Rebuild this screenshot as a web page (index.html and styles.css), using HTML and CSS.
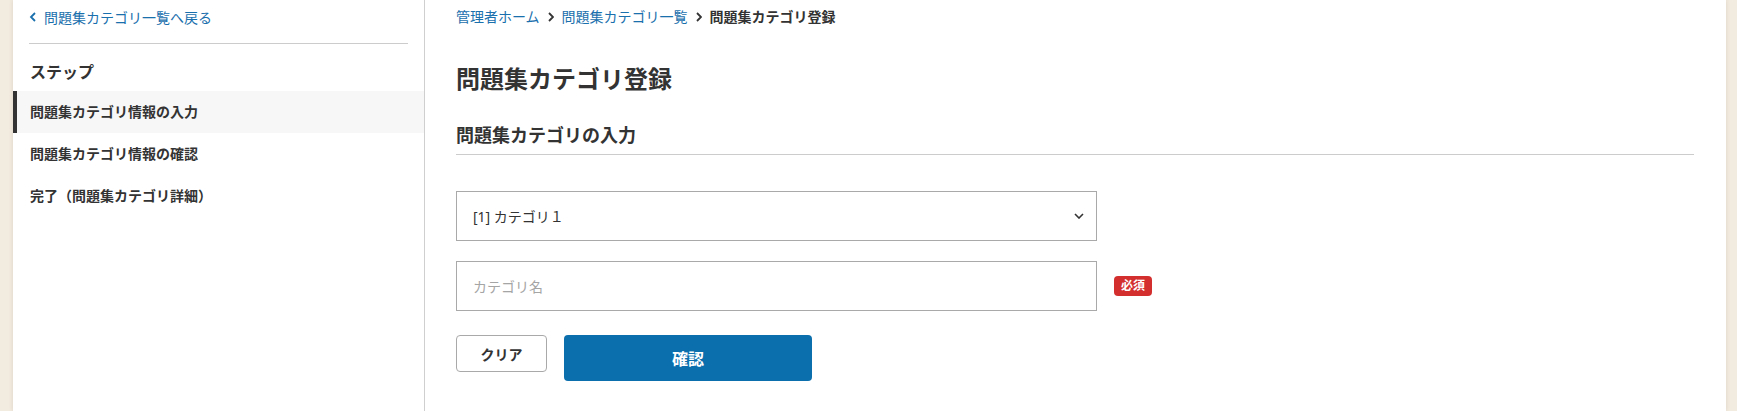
FILE: index.html
```html
<!DOCTYPE html>
<html lang="ja">
<head>
<meta charset="utf-8">
<title>問題集カテゴリ登録</title>
<link rel="stylesheet" href="styles.css">
</head>
<body>
<div class="page">
  <aside class="sidebar">
    <div class="back-wrap">
      <a class="back" href="#">
        <svg class="back-icon" width="8" height="10" viewBox="0 0 8 10"><polyline points="6,1 2,5 6,9" fill="none" stroke="currentColor" stroke-width="1.8"/></svg>
        <span>問題集カテゴリ一覧へ戻る</span>
      </a>
    </div>
    <h2 class="step-title">ステップ</h2>
    <ul class="steps">
      <li class="step active">問題集カテゴリ情報の入力</li>
      <li class="step">問題集カテゴリ情報の確認</li>
      <li class="step">完了（問題集カテゴリ詳細）</li>
    </ul>
  </aside>
  <main class="main">
    <nav class="crumbs">
      <a href="#" class="crumb-link">管理者ホーム</a>
      <svg class="crumb-sep" width="6" height="10" viewBox="0 0 6 10"><polyline points="1,1 5,5 1,9" fill="none" stroke="currentColor" stroke-width="1.8"/></svg>
      <a href="#" class="crumb-link">問題集カテゴリ一覧</a>
      <svg class="crumb-sep" width="6" height="10" viewBox="0 0 6 10"><polyline points="1,1 5,5 1,9" fill="none" stroke="currentColor" stroke-width="1.8"/></svg>
      <span class="crumb-current">問題集カテゴリ登録</span>
    </nav>
    <h1 class="title">問題集カテゴリ登録</h1>
    <h2 class="section">問題集カテゴリの入力</h2>
    <form class="form">
      <div class="row">
        <div class="select-wrap">
          <select class="select">
            <option>[1] カテゴリ１</option>
          </select>
          <svg class="select-arrow" width="10" height="6" viewBox="0 0 10 6"><polyline points="1,1 5,5 9,1" fill="none" stroke="currentColor" stroke-width="1.6"/></svg>
        </div>
      </div>
      <div class="row">
        <input class="input" type="text" placeholder="カテゴリ名">
        <span class="badge">必須</span>
      </div>
      <div class="buttons">
        <button type="button" class="btn-clear">クリア</button>
        <button type="button" class="btn-confirm">確認</button>
      </div>
    </form>
  </main>
</div>
</body>
</html>
```

FILE: styles.css
```css
* { box-sizing: border-box; }
html, body { margin: 0; padding: 0; }
body {
  background: #f2ebdf;
  font-family: "Noto Sans", "Noto Sans CJK JP", sans-serif;
  color: #333;
}
.page {
  display: flex;
  margin: 0 11px 0 13px;
  min-height: 411px;
  background: #fff;
  box-shadow: 0 0 4px rgba(120, 100, 70, 0.18);
}
.sidebar {
  width: 412px;
  flex: none;
  border-right: 1px solid #cfcfcf;
}
.back-wrap {
  margin: 0 16px;
  padding: 6px 0 15px;
  border-bottom: 1px solid #cccccc;
}
.back {
  display: flex;
  align-items: center;
  gap: 7px;
  height: 22px;
  color: #1a6fad;
  text-decoration: none;
  font-size: 14px;
}
.back-icon { flex: none; }
.step-title {
  margin: 16px 0 7px 17px;
  font-size: 16px;
  line-height: 24px;
  font-weight: 700;
  color: #333;
}
.steps { list-style: none; margin: 0; padding: 0; }
.step {
  height: 42px;
  line-height: 42px;
  padding-left: 17px;
  font-size: 14px;
  font-weight: 700;
  color: #333;
}
.step.active {
  background: #f7f7f7;
  border-left: 4px solid #333;
  padding-left: 13px;
}
.main {
  flex: 1;
  padding: 0 32px 0 31px;
}
.crumbs {
  display: flex;
  align-items: center;
  padding-top: 6px;
  height: 28px;
  font-size: 14px;
  line-height: 22px;
}
.crumb-link { color: #1a6fad; text-decoration: none; }
.crumb-sep { color: #333; margin: 0 8px; flex: none; }
.crumb-current { font-weight: 700; color: #333; }
.title {
  margin: 33px 0 0;
  font-size: 24px;
  line-height: 36px;
  font-weight: 700;
}
.section {
  margin: 24px 0 0;
  font-size: 18px;
  line-height: 28px;
  font-weight: 700;
  padding-bottom: 5px;
  border-bottom: 1px solid #cccccc;
}
.form { margin-top: 36px; }
.row {
  display: flex;
  align-items: center;
  gap: 17px;
  margin-bottom: 20px;
}
.select-wrap {
  position: relative;
  width: 641px;
}
.select {
  appearance: none;
  -webkit-appearance: none;
  display: block;
  width: 641px;
  height: 50px;
  border: 1px solid #a9a9a9;
  border-radius: 0;
  background: #fff;
  padding: 0 40px 0 16px;
  font-family: inherit;
  font-size: 14px;
  color: #333;
}
.select-arrow {
  position: absolute;
  right: 13px;
  top: 22px;
  color: #333;
  pointer-events: none;
}
.input {
  width: 641px;
  height: 50px;
  border: 1px solid #a9a9a9;
  border-radius: 0;
  padding: 0 16px;
  font-family: inherit;
  font-size: 14px;
  color: #333;
  outline: none;
}
.input::placeholder { color: #a5a5a5; }
.badge {
  display: inline-block;
  height: 20px;
  line-height: 20px;
  padding: 0 7px;
  background: #d32f2f;
  color: #fff;
  font-size: 12px;
  font-weight: 700;
  border-radius: 4px;
}
.buttons {
  display: flex;
  align-items: flex-start;
  gap: 17px;
  margin-top: 24px;
}
.btn-clear {
  width: 91px;
  height: 37px;
  background: #fff;
  border: 1px solid #a9a9a9;
  border-radius: 4px;
  font-family: inherit;
  font-size: 14px;
  font-weight: 700;
  color: #333;
}
.btn-confirm {
  width: 248px;
  height: 46px;
  background: #0b6ead;
  border: none;
  border-radius: 4px;
  font-family: inherit;
  font-size: 16px;
  font-weight: 700;
  color: #fff;
}
```
